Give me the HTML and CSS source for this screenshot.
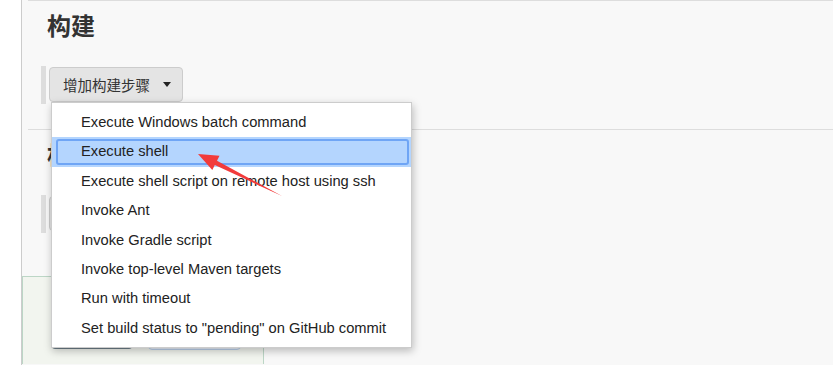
FILE: index.html
```html
<!DOCTYPE html>
<html>
<head>
    <title>构建</title>
    <link rel="stylesheet" href="styles.css">
</head>
<body>
    <div class="gutter"></div>
    <div class="main">
        <div class="section">
            <h2 class="title">构建</h2>
            <div class="step-row">
                <button class="add-btn">增加构建步骤 <span class="caret"></span></button>
            </div>
        </div>

        <div class="section">
            <h2 class="title">构建后操作</h2>
            <div class="step-row">
                <button class="add-btn">增加构建后操作步骤 <span class="caret"></span></button>
            </div>
        </div>

        <div class="bottom-bar">
            <button class="btn-save">保存</button>
            <button class="btn-apply">应用</button>
        </div>

        <!-- dropdown opened from the first button -->
        <ul class="menu">
            <li class="menu-item"><span>Execute Windows batch command</span></li>
            <li class="menu-item active"><span>Execute shell</span></li>
            <li class="menu-item"><span>Execute shell script on remote host using ssh</span></li>
            <li class="menu-item"><span>Invoke Ant</span></li>
            <li class="menu-item"><span>Invoke Gradle script</span></li>
            <li class="menu-item"><span>Invoke top-level Maven targets</span></li>
            <li class="menu-item"><span>Run with timeout</span></li>
            <li class="menu-item"><span>Set build status to "pending" on GitHub commit</span></li>
        </ul>
    </div>

    <svg class="arrow" width="833" height="365" viewBox="0 0 833 365">
        <polygon points="198,154 219.5,155.7 217,160.7 282,196 214.8,165.1 212.3,170.1" fill="#f23b3b"/>
    </svg>
</body>
</html>
```

FILE: styles.css
```css
body {
    margin: 0;
    height: 365px;
    overflow: hidden;
    display: flex;
    background-color: #fff;
    font-family: "Liberation Sans", Arial, "Noto Sans CJK SC", sans-serif;
}

.gutter {
    width: 21px;
}

.main {
    flex: 1;
    position: relative;
    border-left: 1px solid #ccc;
    background-color: #f8f8f8;
}

.section {
    margin-left: 6px;
    border-top: 1px solid #ddd;
    padding-bottom: 25px;
}

.title {
    margin: 0;
    padding: 8px 0 0 19px;
    font-family: "Noto Sans CJK SC", sans-serif;
    font-size: 24px;
    line-height: 32px;
    font-weight: bold;
    color: #333;
}

.step-row {
    margin: 25px 0 0 13px;
    padding: 1px 0 2px 3px;
    border-left: 5px solid #ddd;
}

.add-btn {
    display: flex;
    align-items: center;
    height: 35px;
    padding: 0 11px 0 13px;
    border: 1px solid #ccc;
    border-radius: 4px;
    background-color: #e4e4e4;
    font-family: "Noto Sans CJK SC", sans-serif;
    font-size: 14.5px;
    color: #333;
}

.caret {
    display: inline-block;
    margin-left: 13px;
    border-left: 4px solid transparent;
    border-right: 4px solid transparent;
    border-top: 5px solid #222;
}

.bottom-bar {
    width: 242px;
    height: 88px;
    margin-top: 18px;
    box-sizing: border-box;
    border-top: 1px solid #bcd6c6;
    border-left: 1px solid #bcd6c6;
    border-right: 1px solid #bcd6c6;
    background-color: #f2f5ef;
    padding: 42px 0 0 28px;
    display: flex;
    gap: 15px;
}

.btn-save {
    width: 82px;
    height: 30px;
    border: 1px solid #6d7e88;
    border-radius: 4px;
    background-color: #8394a0;
    color: #fff;
}

.btn-apply {
    width: 93px;
    height: 31px;
    border: 1px solid #b9cfea;
    border-radius: 4px;
    background-color: #e8f0fa;
    color: #333;
}

.menu {
    position: absolute;
    left: 29px;
    top: 102px;
    width: 359px;
    margin: 0;
    padding: 5px 0 4px;
    list-style: none;
    background-color: #fff;
    border: 1px solid #ccc;
    box-shadow: 1px 3px 8px rgba(0, 0, 0, 0.25);
}

.menu-item {
    padding: 2px 2px 2px 4px;
    font-size: 14.7px;
    color: #222;
}

.menu-item span {
    display: block;
    padding: 2px 0 2px 23px;
    line-height: 17.4px;
    border: 2px solid transparent;
    border-radius: 3px;
    white-space: nowrap;
}

.menu-item.active {
    background-color: #b4d5fe;
}

.menu-item.active span {
    border-color: #6fa5f5;
}

.arrow {
    position: absolute;
    left: 0;
    top: 0;
    pointer-events: none;
}
```
